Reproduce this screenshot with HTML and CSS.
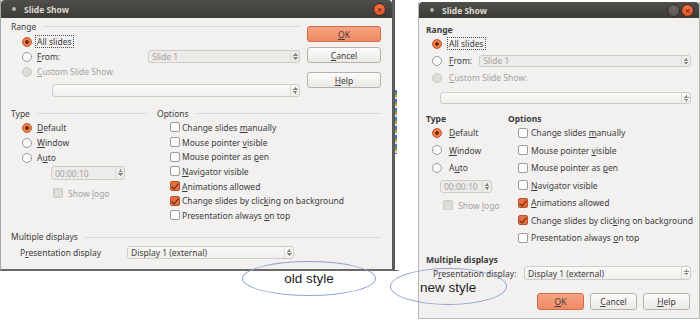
FILE: index.html
```html
<!DOCTYPE html>
<html lang="en">
<head>
<meta charset="UTF-8">
<title>Slide Show dialogs</title>
<link rel="stylesheet" href="styles.css">
</head>
<body>
<div class="desk">
  <div class="behind"></div>
  <div class="stripe"></div>

  <!-- old style dialog -->
  <div class="win old">
    <div class="titlebar">
      <span class="tdot"></span><span class="ttl">Slide Show</span>
      <span class="tbtns"><span class="close">&#215;</span></span>
    </div>
    <div class="body">
      <div class="top">
        <div class="range">
          <div class="hdr"><span>Range</span><i></i></div>
          <div class="row"><span class="radio on"></span><span class="lbl focus">All slides</span></div>
          <div class="row"><span class="radio"></span><span class="lbl"><u>F</u>rom:</span><span class="field dis spin-from">Slide 1<span class="arr"></span></span></div>
          <div class="row dis"><span class="radio off"></span><span class="lbl"><u>C</u>ustom Slide Show</span></div>
          <div class="field combo"><span class="arr"></span></div>
        </div>
        <div class="btns">
          <div class="btn ok"><u>O</u>K</div>
          <div class="btn"><u>C</u>ancel</div>
          <div class="btn help"><u>H</u>elp</div>
        </div>
      </div>
      <div class="mid">
        <div class="type">
          <div class="hdr"><span>Type</span><i></i></div>
          <div class="row"><span class="radio on"></span><span class="lbl"><u>D</u>efault</span></div>
          <div class="row"><span class="radio"></span><span class="lbl"><u>W</u>indow</span></div>
          <div class="row"><span class="radio"></span><span class="lbl">A<u>u</u>to</span></div>
          <div class="field dis spin-time">00:00:10<span class="arr"></span></div>
          <div class="row dis logo"><span class="check off"></span><span class="lbl">Show <u>l</u>ogo</span></div>
        </div>
        <div class="options">
          <div class="hdr"><span>Options</span><i></i></div>
          <div class="row"><span class="check"></span><span class="lbl">Change slides <u>m</u>anually</span></div>
          <div class="row"><span class="check"></span><span class="lbl">Mouse pointer <u>v</u>isible</span></div>
          <div class="row"><span class="check"></span><span class="lbl">Mouse pointer as <u>p</u>en</span></div>
          <div class="row"><span class="check"></span><span class="lbl"><u>N</u>avigator visible</span></div>
          <div class="row"><span class="check on"></span><span class="lbl"><u>A</u>nimations allowed</span></div>
          <div class="row"><span class="check on"></span><span class="lbl">Change slides by clic<u>k</u>ing on background</span></div>
          <div class="row"><span class="check"></span><span class="lbl">Presentation always <u>o</u>n top</span></div>
        </div>
      </div>
      <div class="hdr multi"><span>Multiple displays</span><i></i></div>
      <div class="pres">
        <span class="plbl">P<u>r</u>esentation display</span>
        <span class="field">Display 1 (external)<span class="arr"></span></span>
      </div>
    </div>
  </div>

  <!-- new style dialog -->
  <div class="win new">
    <div class="titlebar">
      <span class="tdot"></span><span class="ttl">Slide Show</span>
      <span class="tbtns"><span class="max"></span><span class="close">&#215;</span></span>
    </div>
    <div class="body">
      <div class="range">
        <div class="hdr"><span>Range</span></div>
        <div class="row"><span class="radio on"></span><span class="lbl focus">All slides</span></div>
        <div class="row"><span class="radio"></span><span class="lbl"><u>F</u>rom:</span><span class="field dis spin-from">Slide 1<span class="arr"></span></span></div>
        <div class="row dis"><span class="radio off"></span><span class="lbl"><u>C</u>ustom Slide Show:</span></div>
        <div class="field combo"><span class="arr"></span></div>
      </div>
      <div class="mid">
        <div class="type">
          <div class="hdr"><span>Type</span></div>
          <div class="row"><span class="radio on"></span><span class="lbl"><u>D</u>efault</span></div>
          <div class="row"><span class="radio"></span><span class="lbl"><u>W</u>indow</span></div>
          <div class="row"><span class="radio"></span><span class="lbl">A<u>u</u>to</span></div>
          <div class="field dis spin-time">00:00:10<span class="arr"></span></div>
          <div class="row dis logo"><span class="check off"></span><span class="lbl">Show <u>l</u>ogo</span></div>
        </div>
        <div class="options">
          <div class="hdr"><span>Options</span></div>
          <div class="row"><span class="check"></span><span class="lbl">Change slides <u>m</u>anually</span></div>
          <div class="row"><span class="check"></span><span class="lbl">Mouse pointer <u>v</u>isible</span></div>
          <div class="row"><span class="check"></span><span class="lbl">Mouse pointer as <u>p</u>en</span></div>
          <div class="row"><span class="check"></span><span class="lbl"><u>N</u>avigator visible</span></div>
          <div class="row"><span class="check on"></span><span class="lbl"><u>A</u>nimations allowed</span></div>
          <div class="row"><span class="check on"></span><span class="lbl">Change slides by clic<u>k</u>ing on background</span></div>
          <div class="row"><span class="check"></span><span class="lbl">Presentation always <u>o</u>n top</span></div>
        </div>
      </div>
      <div class="hdr multi"><span>Multiple displays</span></div>
      <div class="pres">
        <span class="plbl">P<u>r</u>esentation display:</span>
        <span class="field">Display 1 (external)<span class="arr"></span></span>
      </div>
      <div class="btns">
        <div class="btn ok"><u>O</u>K</div>
        <div class="btn"><u>C</u>ancel</div>
        <div class="btn"><u>H</u>elp</div>
      </div>
    </div>
  </div>

  <div class="note note-old">old style</div>
  <div class="note note-new">new style</div>
</div>
</body>
</html>
```

FILE: styles.css
```css
/* two Slide Show dialogs side by side on a white desktop */
body {
    margin: 0;
    background: #fff;
    font-family: "Noto Sans", "DejaVu Sans", sans-serif;
    font-size: 8.5px;
    color: #3c3c3c;
}
.desk {
    position: relative;
    width: 700px;
    height: 320px;
    overflow: hidden;
}
u { text-decoration: underline; text-underline-offset: 1px; }

/* window behind the old dialog */
.behind {
    position: absolute;
    left: 83px;
    top: 200px;
    width: 315px;
    height: 70px;
    border-left: 1px solid #888;
    border-bottom: 1px solid #777;
}
.stripe {
    position: absolute;
    left: 393px;
    top: 90px;
    width: 4px;
    height: 64px;
    background: repeating-linear-gradient(#3f78c8 0 3px, #6a9a3a 3px 5px, #c8a040 5px 7px, #e0e0e0 7px 9px);
}

.win {
    position: absolute;
    background: #f2f1f0;
    border: 1px solid #a8a6a2;
    box-sizing: border-box;
}
.win.old {
    left: 0;
    top: 0;
    width: 395px;
    height: 271px;
    border-right: 3px solid #5a5a58;
    border-bottom: 2px solid #6a6a68;
    border-top: none;
}
.win.new {
    left: 418px;
    top: 2px;
    width: 282px;
    height: 317px;
    border-color: #b9b7b3;
    border-top: none;
}

.titlebar {
    display: flex;
    align-items: center;
    height: 18px;
    background: linear-gradient(#504f4b, #3c3b37);
    color: #dfdbd2;
    font-weight: bold;
    font-size: 8.5px;
    border-radius: 4px 4px 0 0;
}
.new .titlebar { height: 16px; }
.tdot {
    width: 4px;
    height: 4px;
    border-radius: 50%;
    background: #b8b4ac;
    margin: 0 8px 0 11px;
}
.new .tdot { margin-left: 11px; margin-right: 8px; }
.tbtns { margin-left: auto; display: flex; gap: 1px; margin-right: 5px; }
.close, .max {
    width: 11px;
    height: 11px;
    border-radius: 50%;
    background: radial-gradient(circle at 50% 35%, #f47a4a, #d9471c);
    color: #7a2a10;
    font-size: 9px;
    line-height: 11px;
    text-align: center;
    border: 1px solid #3a2a22;
}
.old .close { margin-right: 1px; }
.max { background: radial-gradient(circle at 50% 35%, #6a6966, #52514d); color: transparent; }

.body { padding: 2px 11px 0 10px; }
.new .body { padding: 5px 8px 0 7px; }

.hdr {
    display: flex;
    align-items: center;
    height: 12px;
}
.hdr i {
    flex: 1;
    border-top: 1px solid #dad8d4;
    margin-left: 7px;
    margin-top: 1px;
}
.new .hdr { font-weight: bold; }

.row {
    display: flex;
    align-items: center;
    height: 15px;
    white-space: nowrap;
}
.dis { color: #a3a19e; }
.lbl { padding: 0 1px; }
.focus { outline: 1px dotted #505050; outline-offset: 0; line-height: 11px; }

.radio, .check {
    flex: none;
    box-sizing: border-box;
    width: 10px;
    height: 10px;
    background: #fdfdfd;
    border: 1px solid #9d9b97;
    margin-right: 4px;
    position: relative;
}
.radio { border-radius: 50%; }
.check { border-radius: 2px; }
.radio.on {
    background: radial-gradient(circle, #7c2a0c 0 1.6px, #f08a5e 2.2px, #e0622f);
    border-color: #c45429;
}
.radio.off, .check.off { background: #dedcd9; border-color: #cac8c4; }
.check.on {
    background: #e46f41;
    border-color: #b9532c;
}
.check.on::after {
    content: "";
    position: absolute;
    left: 2px;
    top: 0;
    width: 3px;
    height: 6px;
    border: solid #5b2410;
    border-width: 0 1.5px 1.5px 0;
    transform: rotate(40deg);
}

.field {
    display: flex;
    align-items: center;
    box-sizing: border-box;
    height: 13px;
    padding-left: 3px;
    background: linear-gradient(#fafaf9, #f0efed);
    border: 1px solid #cfccc8;
    border-radius: 3px;
    white-space: nowrap;
}
.field.dis { background: #edecea; color: #a3a19e; }
.arr {
    margin-left: auto;
    width: 8px;
    height: 100%;
    border-left: 1px solid #dcdad6;
    background:
        linear-gradient(135deg, transparent 50%, #8a8885 50%) 2px 2px / 3px 3px no-repeat,
        linear-gradient(225deg, transparent 50%, #8a8885 50%) 4px 2px / 3px 3px no-repeat,
        linear-gradient(45deg, transparent 50%, #8a8885 50%) 2px 6px / 3px 3px no-repeat,
        linear-gradient(315deg, transparent 50%, #8a8885 50%) 4px 6px / 3px 3px no-repeat;
}

/* ---- old dialog layout ---- */
.old .top { display: flex; gap: 7px; }
.old .range { width: 289px; flex: none; }
.old .range .hdr { margin-top: 0; margin-bottom: 2px; }
.old .range .row .radio { margin-left: 11px; }
.old .spin-from { margin-left: auto; width: 152px; }
.old .combo { margin: 5px 0 0 41px; }
.old .btns { display: flex; flex-direction: column; width: 76px; padding-top: 6px; }
.btn {
    box-sizing: border-box;
    height: 16px;
    display: flex;
    align-items: center;
    justify-content: center;
    background: linear-gradient(#fcfcfb, #ebe9e6);
    border: 1px solid #b5b2ad;
    border-radius: 3px;
    margin-bottom: 5px;
}
.btn.ok { background: linear-gradient(#f7a283, #f08a65); border-color: #cf6c49; }
.old .btn.help { margin-top: 4px; }

.old .mid { display: flex; margin-top: 10px; }
.old .type { width: 136px; margin-right: 10px; flex: none; }
.old .mid .hdr { margin-bottom: 1px; }
.old .type .row .radio { margin-left: 11px; }
.old .spin-time { width: 74px; height: 14px; margin: 1px 0 0 40px; }
.old .logo { margin: 6px 0 0 42px; height: 14px; }
.old .options { flex: 1; }
.old .options .row { height: 14.7px; }
.old .options .row .check { margin-left: 13px; margin-right: 1px; }
.old .multi { margin-top: 8px; }
.pres { display: flex; align-items: center; margin-top: 3px; white-space: nowrap; }
.old .plbl { width: 107px; padding-left: 9px; }
.old .pres .field { width: 167px; }

/* ---- new dialog layout ---- */
.new .range .row { height: 17px; }
.new .range .row .radio { margin-left: 6px; margin-right: 6px; }
.new .spin-from { margin-left: 6px; flex: 1; height: 12px; }
.new .combo { margin: 6px 0 0 14px; height: 12px; }
.new .mid { display: flex; margin-top: 8px; }
.new .type { width: 82px; flex: none; }
.new .mid .row { height: 17.5px; }
.new .type .row .radio { margin-left: 6px; margin-right: 6px; }
.new .spin-time { width: 52px; margin: 3.5px 0 0 14px; }
.new .type .logo { margin: 5px 0 0 17px; height: 14px; }
.new .options { flex: 1; }
.new .options .row .check { margin-left: 10px; margin-right: 2px; }
.new .multi { margin-top: 6.5px; }
.new .pres { margin-top: 1px; }
.new .plbl { width: 91px; padding-left: 7px; }
.new .pres .field { flex: 1; height: 14px; }
.new .btns { display: flex; justify-content: flex-end; gap: 6px; margin-top: 13px; padding-right: 1px; }
.new .btn { width: 47px; height: 17px; margin: 0; }

/* hand-drawn notes */
.note {
    position: absolute;
    box-sizing: border-box;
    border: 1px solid #8fa3d2;
    border-radius: 50%;
    display: flex;
    align-items: center;
    justify-content: center;
    font-family: "Liberation Sans", Arial, sans-serif;
    font-size: 13.5px;
    color: #222;
}
.note-old { left: 242px; top: 261px; width: 134px; height: 35px; }
.note-new { left: 390px; top: 268px; width: 117px; height: 37px; justify-content: flex-start; padding-left: 29px; padding-top: 2px; }
```
